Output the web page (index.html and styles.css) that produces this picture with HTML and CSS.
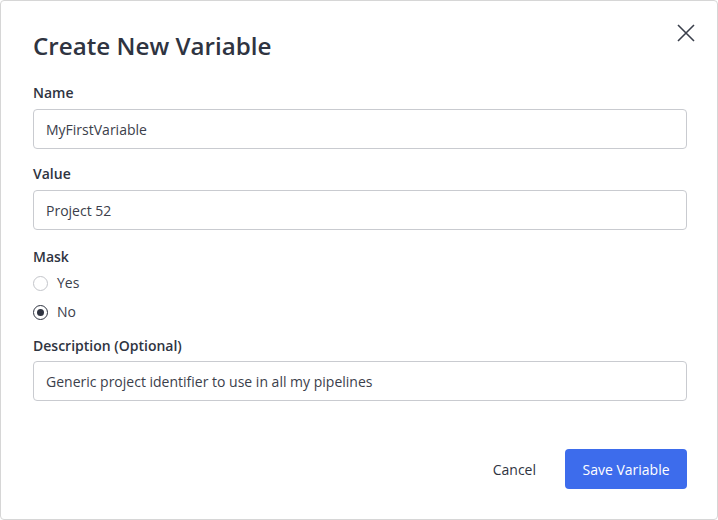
FILE: index.html
```html
<!DOCTYPE html>
<html>
<head>
<meta charset="utf-8">
<link rel="stylesheet" href="styles.css">
</head>
<body>
<div class="dialog">
  <button class="close" aria-label="Close">
    <svg width="18" height="18" viewBox="0 0 18 18"><path d="M1 1L17 17M17 1L1 17" stroke="#3a3f4b" stroke-width="1.6" fill="none"/></svg>
  </button>
  <h1 class="title">Create New Variable</h1>
  <div class="field first">
    <label class="label">Name</label>
    <div class="input">MyFirstVariable</div>
  </div>
  <div class="field">
    <label class="label">Value</label>
    <div class="input">Project 52</div>
  </div>
  <div class="field mask">
    <label class="label">Mask</label>
    <div class="radios">
      <div class="radio"><span class="dot"></span><span>Yes</span></div>
      <div class="radio"><span class="dot on"></span><span>No</span></div>
    </div>
  </div>
  <div class="field desc">
    <label class="label">Description (Optional)</label>
    <div class="input">Generic project identifier to use in all my pipelines</div>
  </div>
  <div class="actions">
    <button class="cancel">Cancel</button>
    <button class="save">Save Variable</button>
  </div>
</div>
</body>
</html>
```
FILE: styles.css
```css
html, body { margin: 0; padding: 0; background: #fff; }
body { font-family: "Open Sans", "Noto Sans", sans-serif; color: #2f3441; }
.dialog {
  position: relative;
  width: 718px; height: 520px; box-sizing: border-box;
  border: 1px solid #d6d6d6; border-radius: 4px;
  padding: 28px 30px 0 32px;
  display: flex; flex-direction: column;
}
.close {
  position: absolute; top: 22px; right: 21px;
  width: 20px; height: 20px; padding: 1px; border: 0; background: none;
}
.close svg { display: block; }
.title {
  margin: 0; font-size: 24.2px; font-weight: 600; line-height: 34px; color: #2f3441;
}
.field { display: flex; flex-direction: column; }
.label { font-size: 14px; font-weight: 600; line-height: 20px; color: #2f3441; }
.field.first { margin-top: 20px; }
.field .label { margin-bottom: 6px; }
.field + .field { margin-top: 15px; }
.input {
  height: 40px; box-sizing: border-box; border: 1px solid #c9cbd0; border-radius: 4px;
  padding: 0 12px; display: flex; align-items: center; font-size: 14px; color: #3b404b;
}
.field.mask { margin-top: 17px; }
.mask .label { margin-bottom: 6px; }
.radios { display: flex; flex-direction: column; gap: 9px; }
.radio { display: flex; align-items: center; gap: 9px; font-size: 14px; line-height: 20px; color: #3b404b; }
.field.desc { margin-top: 14px; }
.field.desc .label { margin-bottom: 5px; }
.dot {
  width: 15px; height: 15px; box-sizing: border-box; border-radius: 50%;
  border: 1px solid #c3c5ca; position: relative;
}
.dot.on { border: 1.5px solid #2f3441; }
.dot.on::after {
  content: ""; position: absolute; left: 50%; top: 50%; width: 7px; height: 7px;
  margin: -3.5px 0 0 -3.5px; border-radius: 50%; background: #2f3441;
}
.actions { display: flex; justify-content: flex-end; align-items: center; margin-top: 48px; gap: 28px; }
button { font-family: inherit; cursor: pointer; }
.cancel { border: 0; background: none; font-size: 14px; color: #2f3441; padding: 0; margin-right: 1px; }
.save {
  height: 40px; width: 122px; padding: 0; border: 0; border-radius: 4px; background: #3d6cec;
  color: #fff; font-size: 14px; font-weight: 500;
}
```
